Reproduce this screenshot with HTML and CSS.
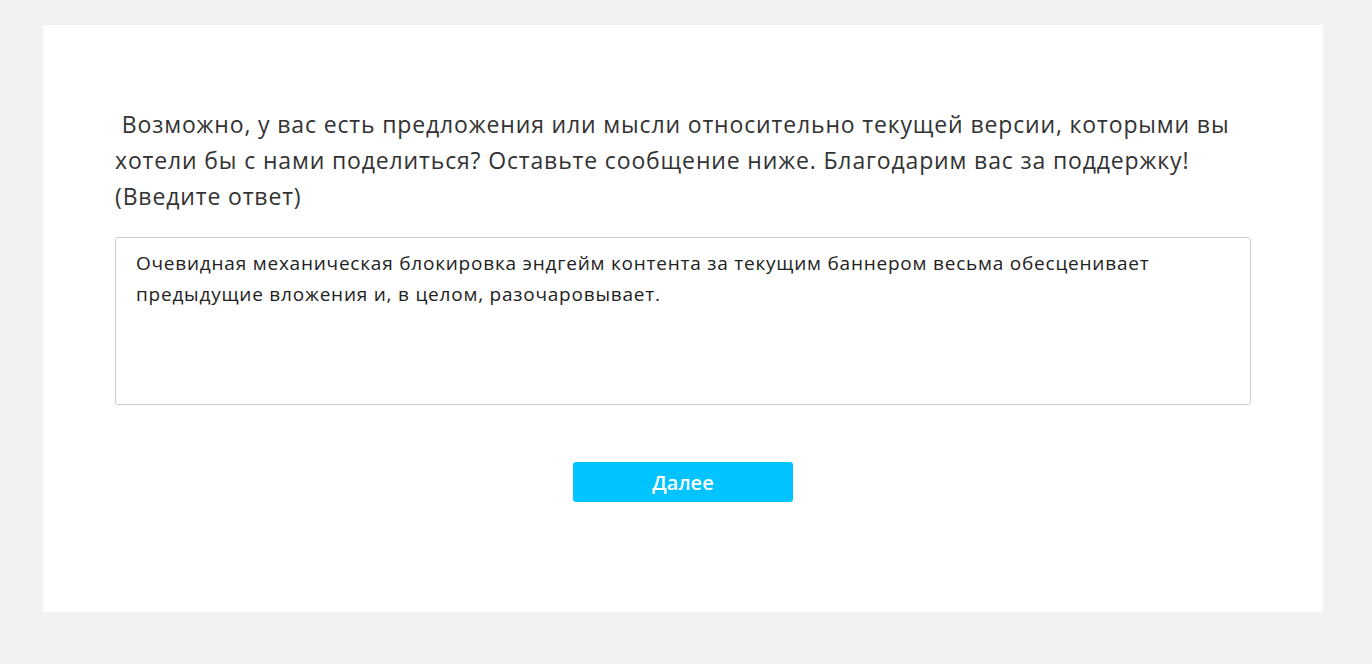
FILE: index.html
```html
<!DOCTYPE html>
<html lang="ru">
<head>
<meta charset="utf-8">
<title>Опрос</title>
<link rel="stylesheet" href="styles.css">
</head>
<body>
<div class="page">
  <div class="card">
    <div class="question">&nbsp;Возможно, у вас есть предложения или мысли относительно текущей версии, которыми вы хотели бы с нами поделиться? Оставьте сообщение ниже. Благодарим вас за поддержку!(Введите ответ)</div>
    <div class="answer">Очевидная механическая блокировка эндгейм контента за текущим баннером весьма обесценивает предыдущие вложения и, в целом, разочаровывает.</div>
    <div class="actions">
      <button class="next">Далее</button>
    </div>
  </div>
</div>
</body>
</html>
```
FILE: styles.css
```css
html, body {
  margin: 0;
  padding: 0;
  background: #f2f2f2;
  font-family: "Open Sans", "Noto Sans", sans-serif;
  color: #333;
}
.page {
  padding: 25px 49px 52px 43px;
}
.card {
  background: #fff;
  height: 587px;
  box-sizing: border-box;
  padding: 81px 72px 0 72px;
}
.question {
  font-size: 23px;
  line-height: 36px;
  letter-spacing: 0.85px;
  width: 1130px;
  color: #333;
}
.answer {
  margin-top: 23px;
  height: 168px;
  box-sizing: border-box;
  border: 1px solid #ccc;
  border-radius: 3px;
  padding: 10px 20px;
  font-size: 19px;
  line-height: 31px;
  letter-spacing: 0.78px;
  color: #222;
}
.actions {
  display: flex;
  justify-content: center;
  margin-top: 57px;
}
.next {
  width: 220px;
  height: 40px;
  border: none;
  border-radius: 3px;
  background: #00c3ff;
  color: #fff;
  font-family: "Open Sans", "Noto Sans", sans-serif;
  font-weight: 600;
  font-size: 20px;
}
```
